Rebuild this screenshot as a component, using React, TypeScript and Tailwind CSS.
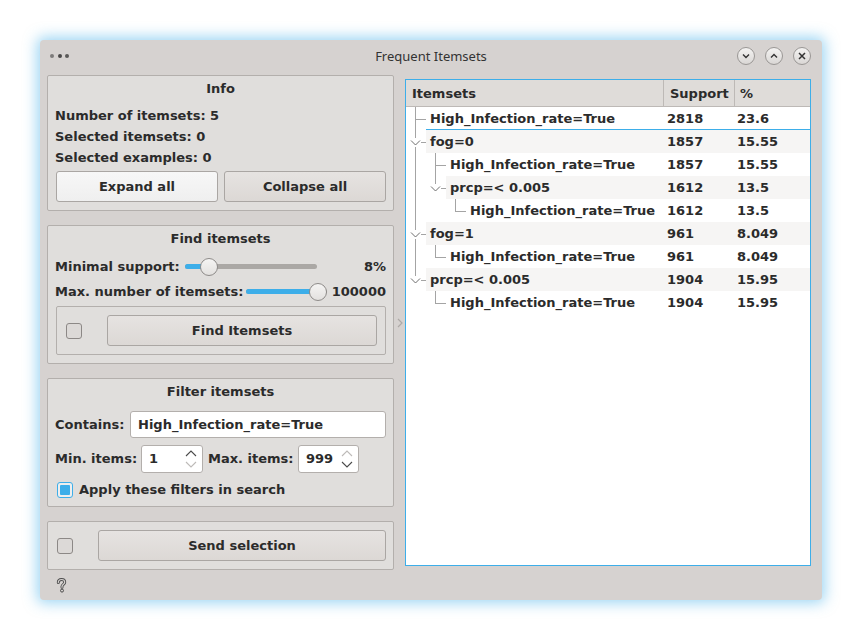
import React from 'react';

type Kind = 'pipe' | 'tee' | 'end' | 'blank' | 'openMid' | 'openLast';

const rows: { cells: Kind[]; label: string; sup: string; pct: string; alt?: boolean; current?: boolean }[] = [
  { cells: ['tee'], label: 'High_Infection_rate=True', sup: '2818', pct: '23.6', current: true },
  { cells: ['openMid'], label: 'fog=0', sup: '1857', pct: '15.55', alt: true },
  { cells: ['pipe', 'tee'], label: 'High_Infection_rate=True', sup: '1857', pct: '15.55' },
  { cells: ['pipe', 'openLast'], label: 'prcp=< 0.005', sup: '1612', pct: '13.5', alt: true },
  { cells: ['pipe', 'blank', 'end'], label: 'High_Infection_rate=True', sup: '1612', pct: '13.5' },
  { cells: ['openMid'], label: 'fog=1', sup: '961', pct: '8.049', alt: true },
  { cells: ['pipe', 'end'], label: 'High_Infection_rate=True', sup: '961', pct: '8.049' },
  { cells: ['openLast'], label: 'prcp=< 0.005', sup: '1904', pct: '15.95', alt: true },
  { cells: ['blank', 'end'], label: 'High_Infection_rate=True', sup: '1904', pct: '15.95' },
];

const LABEL_W = ['w-[237px]', 'w-[217px]', 'w-[197px]'];

const BranchCell = ({ kind }: { kind: Kind }) => {
  const c = '#a4a4a4';
  return (
    <svg width="20" height="23" className="block shrink-0">
      {(kind === 'pipe' || kind === 'tee') && <line x1="9.5" y1="0" x2="9.5" y2="23" stroke={c} />}
      {kind === 'end' && <line x1="9.5" y1="0" x2="9.5" y2="13" stroke={c} />}
      {(kind === 'tee' || kind === 'end') && <line x1="10" y1="12.5" x2="20" y2="12.5" stroke={c} />}
      {(kind === 'openMid' || kind === 'openLast') && (
        <>
          <line x1="9.5" y1="0" x2="9.5" y2="8" stroke={c} />
          {kind === 'openMid' && <line x1="9.5" y1="17" x2="9.5" y2="23" stroke={c} />}
          <polyline points="5,10.5 9.5,15 14,10.5" fill="none" stroke="#6e6e6e" />
          <line x1="15" y1="12.5" x2="20" y2="12.5" stroke={c} />
        </>
      )}
    </svg>
  );
};

const Checkbox = ({ checked }: { checked?: boolean }) =>
  checked ? (
    <div className="w-[16px] h-[16px] shrink-0 rounded-[3px] border border-[#3daee9] bg-[#eeeeee] p-[2px]">
      <div className="w-full h-full rounded-[1px] bg-[#3daee9]" />
    </div>
  ) : (
    <div className="w-[16px] h-[16px] shrink-0 rounded-[3px] border border-[#8c8886] bg-[#dcd9d7]" />
  );

const Button = ({ children, light, className = '' }: { children: React.ReactNode; light?: boolean; className?: string }) => (
  <div
    className={`h-[31px] flex items-center justify-center rounded-[3px] border border-[#aaa6a3] bg-linear-to-b ${
      light ? 'from-[#f7f7f7] to-[#efefef]' : 'from-[#e6e3e1] to-[#dcd8d5]'
    } ${className}`}
  >
    {children}
  </div>
);

const Slider = ({ width, fill, handle }: { width: string; fill: string; handle: string }) => (
  <div className={`relative h-[20px] flex items-center shrink-0 ${width}`}>
    <div className="w-full h-[5px] rounded-full bg-[#aba8a5] overflow-hidden">
      <div className={`h-full bg-[#3daee9] ${fill}`} />
    </div>
    <div
      className={`absolute top-[1px] w-[18px] h-[18px] rounded-full border border-[#8e8b89] bg-linear-to-b from-[#f5f4f3] to-[#e3e1df] ${handle}`}
    />
  </div>
);

const Arrow = ({ up, on }: { up?: boolean; on?: boolean }) => (
  <svg width="12" height="7" className="block">
    <polyline
      points={up ? '1,6 6,1 11,6' : '1,1 6,6 11,1'}
      fill="none"
      stroke={on ? '#4a4a4a' : '#bdbab8'}
      strokeWidth="1.1"
    />
  </svg>
);

const SpinBox = ({ value, width, upOn, downOn }: { value: string; width: string; upOn?: boolean; downOn?: boolean }) => (
  <div className={`h-[28px] flex items-center justify-between rounded-[3px] border border-[#b3afac] bg-white pl-[7px] pr-[5px] shrink-0 ${width}`}>
    <span>{value}</span>
    <div className="flex flex-col gap-[4px]">
      <Arrow up on={upOn} />
      <Arrow on={downOn} />
    </div>
  </div>
);

const Group = ({ title, className, children }: { title?: string; className: string; children: React.ReactNode }) => (
  <div className={`rounded-[2px] border border-[#b3afac] bg-[#e0dedc] px-[7px] ${className}`}>
    {title && <div className="pt-[3px] h-[22px] leading-[20px] text-center">{title}</div>}
    {children}
  </div>
);

const TitleButton = ({ kind }: { kind: 'min' | 'max' | 'close' }) => (
  <div className="w-[18px] h-[18px] rounded-full border border-[#9a9795] bg-linear-to-b from-[#f4f3f2] to-[#dad7d5] flex items-center justify-center">
    <svg width="10" height="10">
      {kind === 'min' && <polyline points="2,3.5 5,6.5 8,3.5" fill="none" stroke="#333" strokeWidth="1.4" />}
      {kind === 'max' && <polyline points="2,6.5 5,3.5 8,6.5" fill="none" stroke="#333" strokeWidth="1.4" />}
      {kind === 'close' && (
        <path d="M2 2 L8 8 M8 2 L2 8" fill="none" stroke="#333" strokeWidth="1.5" />
      )}
    </svg>
  </div>
);

export default function App() {
  return (
    <div className="w-[862px] h-[640px] bg-white pt-[40px] pl-[40px]">
      <div className="w-[782px] h-[560px] bg-[#d6d2d0] rounded-[4px] shadow-[0_0_14px_3px_rgba(61,174,233,0.5)] flex flex-col text-[13px] font-bold text-[#2b2b2b] font-['DejaVu_Sans',sans-serif]">
        {/* title bar */}
        <div className="h-[35px] pb-[3px] grid grid-cols-[1fr_auto_1fr] items-center">
          <div className="flex items-center gap-[3.5px] pl-[10px]">
            <div className="w-[4px] h-[4px] rounded-full bg-[#7d7b7a]" />
            <div className="w-[4px] h-[4px] rounded-full bg-[#4a4948]" />
            <div className="w-[4px] h-[4px] rounded-full bg-[#5a5958]" />
          </div>
          <div className="pt-[2px] font-normal text-[13px] text-[#333] font-['Noto_Sans',sans-serif]">Frequent Itemsets</div>
          <div className="flex justify-end gap-[10px] pr-[11px]">
            <TitleButton kind="min" />
            <TitleButton kind="max" />
            <TitleButton kind="close" />
          </div>
        </div>

        {/* body */}
        <div className="flex pl-[7px] pr-[11px]">
          {/* controls */}
          <div className="w-[347px] flex flex-col">
            <div className="flex flex-col gap-[14px]">
              <Group title="Info" className="h-[136px]">
                <div className="mt-[7px]">
                  <div className="h-[21px] leading-[21px]">Number of itemsets: 5</div>
                  <div className="h-[21px] leading-[21px]">Selected itemsets: 0</div>
                  <div className="h-[21px] leading-[21px]">Selected examples: 0</div>
                </div>
                <div className="mt-[3px] ml-[1px] grid grid-cols-2 gap-[6px]">
                  <Button light>Expand all</Button>
                  <Button>Collapse all</Button>
                </div>
              </Group>

              <Group title="Find itemsets" className="h-[139px]">
                <div className="mt-[6px] h-[25px] flex items-center">
                  <div className="w-[130px] shrink-0">Minimal support:</div>
                  <Slider width="w-[132px]" fill="w-[20px]" handle="left-[15px]" />
                  <div className="flex-1 text-right">8%</div>
                </div>
                <div className="h-[25px] flex items-center">
                  <div className="w-[191px] shrink-0">Max. number of itemsets:</div>
                  <Slider width="w-[81px]" fill="w-[70px]" handle="left-[63px]" />
                  <div className="flex-1 text-right">100000</div>
                </div>
                <div className="mt-[2px] ml-[1px] h-[49px] rounded-[2px] border border-[#b3afac] flex items-center pl-[9px] pr-[8px]">
                  <Checkbox />
                  <Button className="ml-[25px] flex-1">Find Itemsets</Button>
                </div>
              </Group>

              <Group title="Filter itemsets" className="h-[129px]">
                <div className="mt-[10px] flex items-center">
                  <div className="w-[75px] shrink-0">Contains:</div>
                  <div className="flex-1 h-[27px] flex items-center rounded-[3px] border border-[#b3afac] bg-white pl-[7px]">
                    High_Infection_rate=True
                  </div>
                </div>
                <div className="mt-[7px] flex items-center">
                  <div className="w-[86px] shrink-0">Min. items:</div>
                  <SpinBox value="1" width="w-[62px]" upOn />
                  <div className="ml-[5px] w-[90px] shrink-0">Max. items:</div>
                  <SpinBox value="999" width="w-[61px]" downOn />
                </div>
                <div className="mt-[7px] flex items-center ml-[2px] gap-[6px]">
                  <Checkbox checked />
                  <span>Apply these filters in search</span>
                </div>
              </Group>

              <div className="h-[49px] rounded-[2px] border border-[#b3afac] bg-[#e0dedc] flex items-center pl-[9px] pr-[7px]">
                <Checkbox />
                <Button className="ml-[25px] flex-1">Send selection</Button>
              </div>
            </div>

            <div className="pl-[9px] pt-[8px]">
              <svg width="11" height="15" className="block">
                <path
                  d="M2.3 4.6 C2.3 2.6 3.7 1.5 5.5 1.5 C7.4 1.5 8.7 2.7 8.7 4.3 C8.7 6.3 6 6.4 6 8.6 L6 9.3"
                  fill="none"
                  stroke="#4d4d4d"
                  strokeWidth="3"
                  strokeLinecap="round"
                />
                <path
                  d="M2.3 4.6 C2.3 2.6 3.7 1.5 5.5 1.5 C7.4 1.5 8.7 2.7 8.7 4.3 C8.7 6.3 6 6.4 6 8.6 L6 9.3"
                  fill="none"
                  stroke="#d6d2d0"
                  strokeWidth="1.2"
                  strokeLinecap="round"
                />
                <circle cx="6" cy="12.6" r="1.5" fill="#d6d2d0" stroke="#4d4d4d" strokeWidth="1" />
              </svg>
            </div>
          </div>

          {/* splitter */}
          <div className="w-[11px] mt-[4px] h-[487px] flex items-center justify-center">
            <svg width="6" height="10" className="block">
              <polyline points="1,1 5,5 1,9" fill="none" stroke="#aeaaa7" strokeWidth="1.2" />
            </svg>
          </div>

          {/* tree */}
          <div className="w-[406px] mt-[4px] h-[487px] border border-[#3daee9] bg-white">
            <div className="h-[27px] flex border-b border-[#bdb9b6] bg-[#dfdcd9]">
              <div className="w-[258px] border-r border-[#bdb9b6] pl-[6px] pt-[2px] flex items-center">Itemsets</div>
              <div className="w-[71px] border-r border-[#bdb9b6] pl-[6px] pt-[2px] flex items-center">Support</div>
              <div className="flex-1 pl-[5px] pt-[2px] flex items-center">%</div>
            </div>
            {rows.map((r, i) => (
              <div key={i} className="flex h-[23px]">
                {r.cells.map((k, j) => (
                  <BranchCell key={j} kind={k} />
                ))}
                <div
                  className={`flex flex-1 items-center pt-[1px] ${r.alt ? 'bg-[#f6f5f4]' : ''} ${
                    r.current ? 'border-b border-[#3daee9]' : ''
                  }`}
                >
                  <div className={`${LABEL_W[r.cells.length - 1]} pl-[4px] whitespace-nowrap`}>{r.label}</div>
                  <div className="w-[71px] pl-[4px]">{r.sup}</div>
                  <div className="flex-1 pl-[3px]">{r.pct}</div>
                </div>
              </div>
            ))}
          </div>
        </div>
      </div>
    </div>
  );
}
